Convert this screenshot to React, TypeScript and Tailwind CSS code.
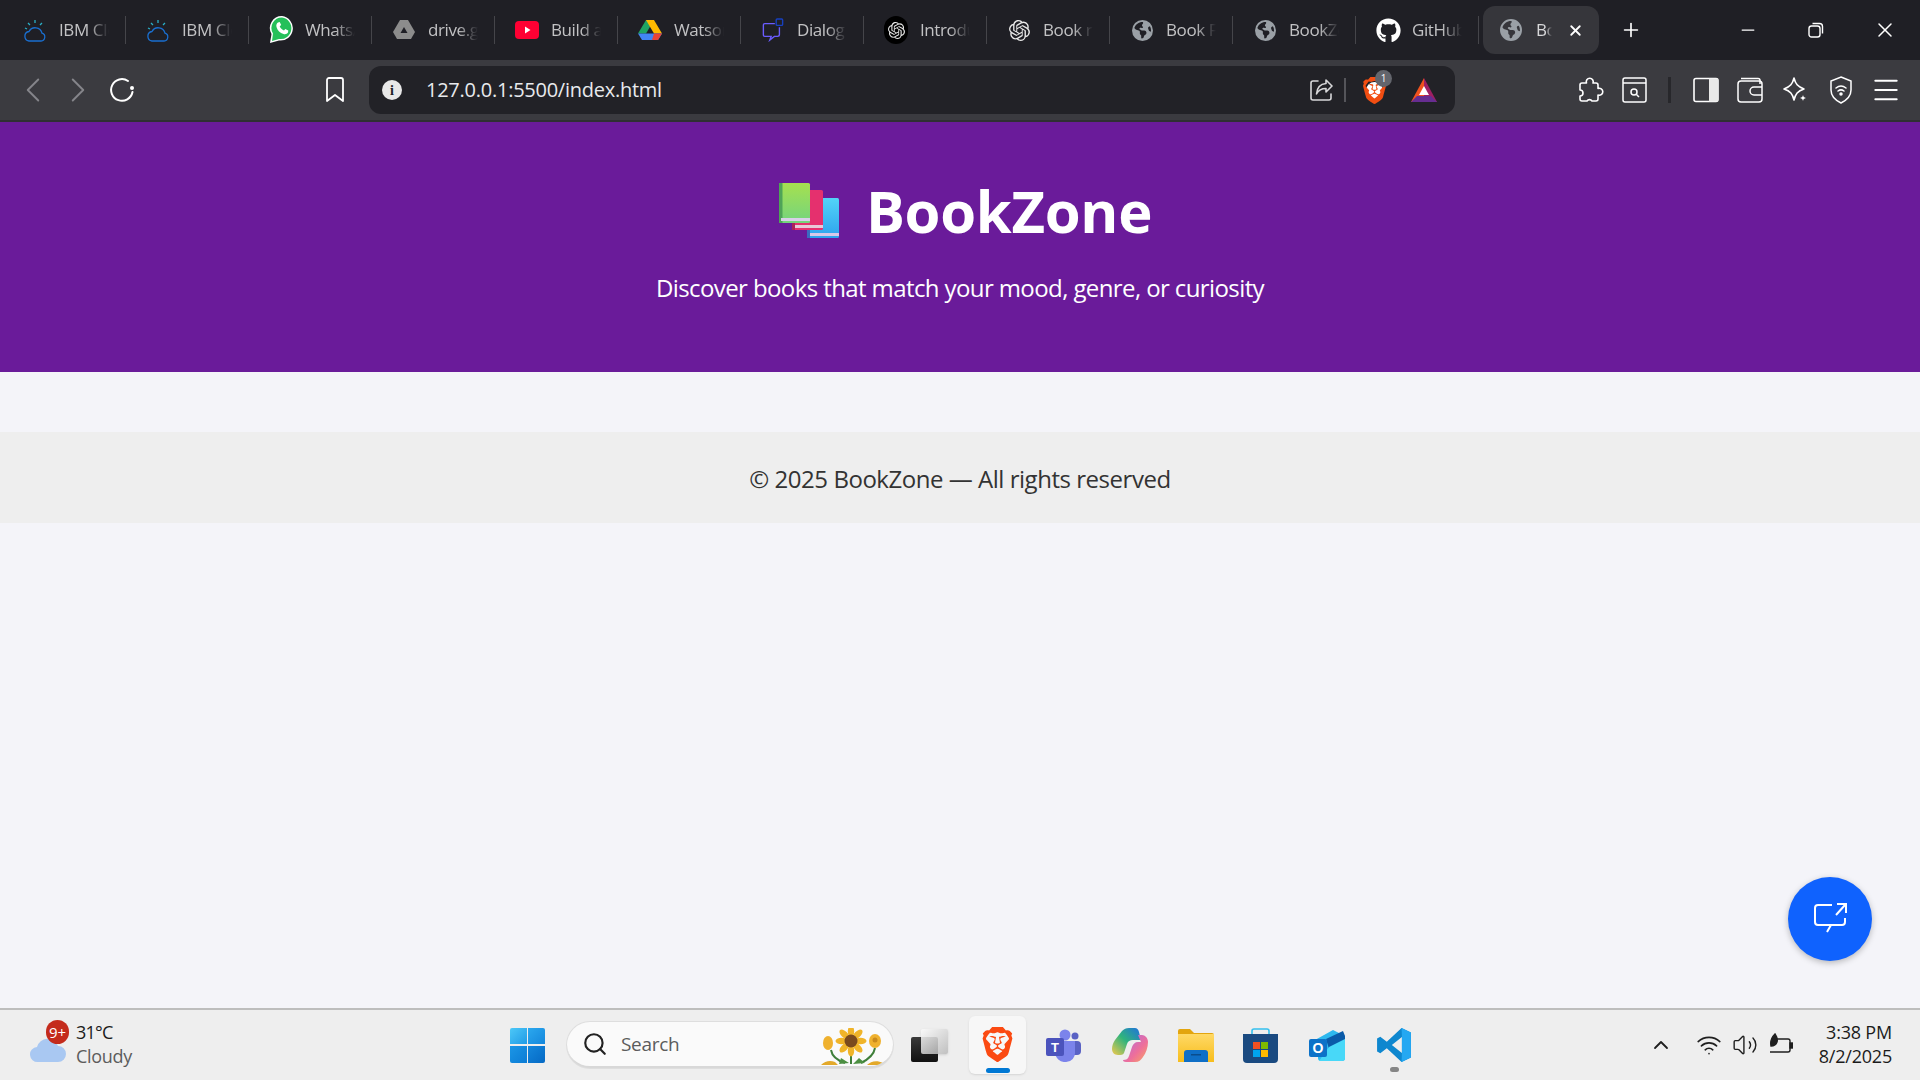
import { ChevronLeft, ChevronRight, ChevronUp, Plus, Minus, X, Search, Wifi, Volume2, Menu } from 'lucide-react';
import { FaGithub } from 'react-icons/fa';
import { FaEarthAmericas } from 'react-icons/fa6';
import { SiOpenai, SiBrave } from 'react-icons/si';
import type { ReactNode } from 'react';

const font = { fontFamily: '"Open Sans", "Noto Sans", sans-serif' };

function IbmCloud() {
  return (
    <svg width="24" height="26" viewBox="0 0 24 26" fill="none" strokeWidth="1.300">
      <path d="M6 24h12a4 4 0 0 0 1-7.800A7 7 0 0 0 6 14.500 4.800 4.800 0 0 0 6 24z" stroke="#1a6fd0" />
      <path d="M5 6l2 2M12 3v3M19 6l-2 2M2 11l2 1" stroke="#2ab0c8" />
    </svg>
  );
}

function WhatsApp() {
  return (
    <svg width="26" height="30" viewBox="0 0 26 30" className="ml-[1px]">
      <path d="M13 1a12 12 0 0 0-10.500 18L1 28l9-2.500A12 12 0 1 0 13 1z" fill="#fff" />
      <path d="M13 2.500a10.500 10.500 0 0 0-9 16L3 26l7-2a10.500 10.500 0 1 0 3-21.500z" fill="#25c05a" />
      <path d="M9 7.500c-1.500 1-2 2.500-1.500 4.500 1 3.500 3.500 6 7 7 2 .5 3.500 0 4.500-1.500l.3-2-3-1.500-1.300 1.500c-2-.8-3.500-2.300-4.300-4.300l1.500-1.300-1.500-3z" fill="#fff" />
    </svg>
  );
}

function DriveGray() {
  return (
    <svg width="24" height="24" viewBox="0 0 24 24">
      <path d="M8 2h8l7 12-4 7H5l-4-7z" fill="#8c8c8c" />
      <path d="M12 9l3.500 6h-7z" fill="#1f1f25" />
    </svg>
  );
}

function YouTube() {
  return (
    <svg width="24" height="20" viewBox="0 0 24 20">
      <rect width="24" height="18" y="1" rx="4" fill="#ff0033" />
      <path d="M10 6.500l5.500 3.500-5.500 3.500z" fill="#fff" />
    </svg>
  );
}

function DriveColor() {
  return (
    <svg width="24" height="22" viewBox="0 0 24 22">
      <path d="M8 1h8L8 14.500H0z" fill="#1fa463" />
      <path d="M16 1l8 13.500h-8L8 1z" fill="#ffba00" />
      <path d="M0 14.500h24L20 21H4z" fill="#4285f4" />
      <path d="M24 14.500L20 21h-6l2-6.500z" fill="#ea4335" />
    </svg>
  );
}

function Dialog() {
  return (
    <svg width="22" height="24" viewBox="0 0 24 26" fill="none">
      <path d="M14 6H3a1.500 1.500 0 0 0-1.500 1.500v11A1.500 1.500 0 0 0 3 20h7l-1.500 4 5-4H17a2 2 0 0 0 2-2V10" stroke="#6a5cff" strokeWidth="1.500" />
      <rect x="15.500" y="1" width="7" height="7" rx="1" stroke="#1740c0" strokeWidth="1.500" />
    </svg>
  );
}

function OpenAiDark() {
  return (
    <div className="w-[24px] h-[28px] rounded-full bg-black flex items-center justify-center">
      <SiOpenai size={17} color="#e8e8e8" />
    </div>
  );
}

const tabs: { icon: ReactNode; label: string }[] = [
  { icon: <IbmCloud />, label: 'IBM Cloud' },
  { icon: <IbmCloud />, label: 'IBM Cloud' },
  { icon: <WhatsApp />, label: 'WhatsApp' },
  { icon: <DriveGray />, label: 'drive.google' },
  { icon: <YouTube />, label: 'Build a' },
  { icon: <DriveColor />, label: 'Watson' },
  { icon: <Dialog />, label: 'Dialog' },
  { icon: <OpenAiDark />, label: 'Introduction' },
  { icon: <SiOpenai size={21} color="#e8e8e8" />, label: 'Book recs' },
  { icon: <FaEarthAmericas size={21} color="#9aa0a6" />, label: 'Book Finder' },
  { icon: <FaEarthAmericas size={21} color="#9aa0a6" />, label: 'BookZone' },
  { icon: <FaGithub size={25} color="#ffffff" />, label: 'GitHub' },
];

function TabStrip() {
  return (
    <div className="h-[60px] bg-[#1f1f25] flex items-center pl-[3px] shrink-0">
      {tabs.map((t, i) => (
        <div key={i} className="w-[123px] h-[28px] flex items-center border-r border-[#45454a] last:border-r-0 shrink-0">
          <div className="w-[56px] flex justify-center pl-[8px] shrink-0">{t.icon}</div>
          <span className="w-[50px] overflow-hidden whitespace-nowrap text-[17px] tracking-[-0.4px] text-[#c2c2c4] [mask-image:linear-gradient(to_right,black_60%,transparent)]">
            {t.label}
          </span>
        </div>
      ))}
      <div className="w-[116px] h-[48px] rounded-[12px] bg-[#36363b] flex items-center pl-[17px] shrink-0 ml-[4px]">
        <FaEarthAmericas size={22} color="#9aa0a6" />
        <span className="w-[16px] ml-[14px] overflow-hidden whitespace-nowrap text-[17px] tracking-[-0.4px] text-[#d8d8da] [mask-image:linear-gradient(to_right,black_60%,transparent)]">BookZone</span>
        <X size={17} color="#fff" strokeWidth={2.600} className="ml-[15px]" />
      </div>
      <Plus size={22} color="#fff" strokeWidth={1.800} className="ml-[21px]" />
      <div className="ml-auto flex items-center">
        <div className="w-[68px] flex justify-center"><Minus size={20} color="#fff" strokeWidth={1.500} /></div>
        <div className="w-[68px] flex justify-center">
          <svg width="16" height="16" viewBox="0 0 16 16" fill="none" stroke="#fff" strokeWidth="1.400">
            <rect x="1" y="4" width="11" height="11" rx="2.500" />
            <path d="M4.500 1.500h7a3 3 0 0 1 3 3v7" />
          </svg>
        </div>
        <div className="w-[70px] flex justify-center"><X size={24} color="#fff" strokeWidth={1.500} /></div>
      </div>
    </div>
  );
}

function Toolbar() {
  return (
    <div className="h-[62px] bg-[#3b3b40] flex items-start pt-[6px] shrink-0 border-b-2 border-[#2f2f33]">
      <div className="h-[48px] flex items-center shrink-0">
        <ChevronLeft size={42} color="#85858a" strokeWidth={1.100} className="ml-[12px]" />
        <ChevronRight size={42} color="#85858a" strokeWidth={1.100} className="ml-[3px]" />
        <svg width="26" height="26" viewBox="0 0 26 26" fill="none" stroke="#fff" strokeWidth="2" className="ml-[10px]">
          <path d="M23.500 15A10.800 10.800 0 1 1 19 4" strokeLinecap="round" />
          <circle cx="23" cy="11" r="2" fill="#fff" stroke="none" />
        </svg>
        <svg width="20" height="26" viewBox="0 0 20 26" fill="none" stroke="#fff" strokeWidth="1.800" strokeLinejoin="round" className="ml-[190px]">
          <path d="M2 3a2 2 0 0 1 2-2h12a2 2 0 0 1 2 2v21l-8-6-8 6z" />
        </svg>
      </div>
      <div className="ml-[24px] w-[1086px] h-[48px] rounded-[12px] bg-[#222227] flex items-center pl-[13px] shrink-0">
        <div className="w-[20px] h-[20px] rounded-full bg-[#e8e8e8] flex items-center justify-center text-[14px] font-bold text-[#222227]" style={{ fontFamily: '"Liberation Serif", serif' }}>i</div>
        <span className="ml-[24px] text-[20px] tracking-[-0.250px] text-[#e8eaed]">127.0.0.1:5500/index.html</span>
        <div className="ml-auto flex items-center">
          <svg width="24" height="24" viewBox="0 0 24 24" fill="none" stroke="#d8d8da" strokeWidth="1.600" strokeLinecap="round" strokeLinejoin="round">
            <path d="M9 3H4a2 2 0 0 0-2 2v15a2 2 0 0 0 2 2h16a2 2 0 0 0 2-2v-4" />
            <path d="M23 8l-6-6v3.500C11 6 8 10 7.500 16c2-4 5-5.500 9.500-5.500V14z" />
          </svg>
          <div className="w-[2px] h-[24px] bg-[#55555a] ml-[11px]" />
          <div className="relative ml-[15px]">
            <div className="absolute inset-[5px] rounded-full bg-white" />
            <SiBrave size={27} color="#f24e12" className="relative" />
            <div className="absolute -top-[7px] left-[14px] w-[17px] h-[17px] rounded-full bg-[#63656c] text-white text-[10px] flex items-center justify-center">1</div>
          </div>
          <svg width="28" height="26" viewBox="0 0 28 26" className="ml-[22px] mr-[17px]">
            <path d="M14 1L1 25h13z" fill="#f0521e" />
            <path d="M14 1l13 24H14z" fill="#9e1f63" />
            <path d="M1 25l6-6h14l6 6z" fill="#662d91" />
            <path d="M14 9l5 9H9z" fill="#fff" />
          </svg>
        </div>
      </div>
      <div className="h-[48px] flex items-center pl-[122px] shrink-0">
        <svg width="28" height="28" viewBox="0 0 28 28" fill="none" stroke="#fff" strokeWidth="1.600" strokeLinejoin="round">
          <path d="M3 9a2 2 0 0 1 2-2h4.500a3.500 3.500 0 1 1 6.500 0H19a2 2 0 0 1 2 2v3.500a3.500 3.500 0 1 1 0 6.500V23a2 2 0 0 1-2 2h-4a3 3 0 0 0-5 0H5a2 2 0 0 1-2-2v-3a3 3 0 0 0 0-6z" />
        </svg>
        <svg width="25" height="26" viewBox="0 0 25 26" fill="none" stroke="#fff" strokeWidth="1.500" className="ml-[17px]">
          <rect x="1" y="1" width="23" height="24" rx="2" />
          <path d="M1 6h23" />
          <circle cx="12" cy="15" r="3" />
          <path d="M14.500 17.500L17 20" />
        </svg>
        <div className="w-[3px] h-[26px] bg-[#27272b] ml-[21px]" />
        <svg width="26" height="26" viewBox="0 0 26 26" fill="none" className="ml-[22px]">
          <rect x="1" y="1.500" width="24" height="23" rx="2" stroke="#fff" strokeWidth="1.600" />
          <rect x="16" y="1.500" width="9" height="23" fill="#e8e8e8" />
        </svg>
        <svg width="26" height="26" viewBox="0 0 26 26" fill="none" stroke="#fff" strokeWidth="1.500" className="ml-[18px]">
          <path d="M4 1.500h17a2 2 0 0 1 2 2V7" />
          <rect x="1" y="4" width="24" height="21" rx="3" />
          <path d="M25 10h-8a3.500 3.500 0 0 0 0 8h8" />
        </svg>
        <svg width="26" height="28" viewBox="0 0 26 28" fill="none" className="ml-[19px]">
          <path d="M12 2c1.500 6 3.500 8.500 10 11-6.500 2-8.500 5-10 11-1.500-6-3.500-9-10-11 6.500-2.500 8.500-5 10-11z" stroke="#fff" strokeWidth="1.600" strokeLinejoin="round" />
          <path d="M21 19c.5 2 1 2.500 3 3-2 .5-2.500 1-3 3-.5-2-1-2.500-3-3 2-.5 2.500-1 3-3z" fill="#fff" />
        </svg>
        <svg width="24" height="28" viewBox="0 0 24 28" fill="none" stroke="#fff" strokeWidth="1.500" className="ml-[21px]">
          <path d="M12 1l10 4v9c0 6-4 10-10 13C6 24 2 20 2 14V5z" />
          <path d="M7 12c3-2.500 7-2.500 10 0M9 15c2-1.500 4-1.500 6 0" strokeLinecap="round" />
          <circle cx="12" cy="18" r="1" fill="#fff" />
        </svg>
        <Menu size={32} color="#fff" strokeWidth={1.500} className="ml-[17px]" />
      </div>
    </div>
  );
}

function BookStack() {
  return (
    <svg width="60" height="55" viewBox="0 0 60 55">
      <defs>
        <linearGradient id="greenBook" x1="0" y1="0" x2="0" y2="1">
          <stop offset="0" stopColor="#a6e04f" />
          <stop offset="1" stopColor="#74d47e" />
        </linearGradient>
        <linearGradient id="blueBook" x1="0" y1="0" x2="0" y2="1">
          <stop offset="0" stopColor="#52d4f8" />
          <stop offset="1" stopColor="#2ea2ee" />
        </linearGradient>
      </defs>
      <rect x="28" y="15" width="32" height="40" rx="1.500" fill="url(#blueBook)" />
      <rect x="28" y="15" width="3" height="40" fill="#3a6cc0" />
      <rect x="31" y="50" width="29" height="3" fill="#d8c8e8" />
      <rect x="13" y="7" width="31" height="40" rx="1.500" fill="#e5306e" />
      <rect x="13" y="7" width="3" height="40" fill="#a82358" />
      <rect x="16" y="42" width="28" height="3" fill="#e8c8d8" />
      <rect x="0" y="0" width="31" height="40" rx="1.500" fill="url(#greenBook)" />
      <rect x="0" y="0" width="3.500" height="40" fill="#4fa358" />
      <rect x="2" y="35" width="29" height="3" fill="#d8d0e8" />
    </svg>
  );
}

function Sunflower() {
  const petals = [0, 45, 90, 135, 180, 225, 270, 315];
  return (
    <svg width="63" height="38" viewBox="0 0 63 38">
      <path d="M30 20v16M10 22c1 6 5 10 14 13M54 20c-1 6-6 11-14 15" stroke="#3f7f3a" strokeWidth="2" fill="none" />
      <path d="M20 30l8 5-10 1zM38 30l-6 6 12-1z" fill="#4c8f42" />
      <path d="M0 37c4-4 9-5 14-3l3 3zM46 37c4-4 10-5 16-2v2z" fill="#e3a92a" />
      {petals.map(a => (
        <ellipse key={a} cx="30" cy="3.500" rx="3.200" ry="6" fill="#f0b429" transform={`rotate(${a} 30 13)`} />
      ))}
      <circle cx="30" cy="13" r="6.500" fill="#7a4a1e" />
      <ellipse cx="7" cy="15" rx="5" ry="7" fill="#efb12e" />
      <ellipse cx="54" cy="13" rx="6" ry="7" fill="#efb12e" />
      <circle cx="54" cy="12" r="2.500" fill="#c98a1c" />
    </svg>
  );
}

function Win11() {
  return (
    <div className="grid grid-cols-2 gap-[1.500px] w-[35px] h-[35px]">
      <div className="rounded-tl-[2px] bg-gradient-to-br from-[#4cc8f8] to-[#1e9be6]" />
      <div className="rounded-tr-[2px] bg-gradient-to-br from-[#2ba8ee] to-[#1487dc]" />
      <div className="rounded-bl-[2px] bg-gradient-to-br from-[#1b96e6] to-[#0c7cd5]" />
      <div className="rounded-br-[2px] bg-gradient-to-br from-[#1487dc] to-[#0669c4]" />
    </div>
  );
}

function TaskView() {
  return (
    <div className="relative w-[37px] h-[33px]">
      <div className="absolute left-0 bottom-0 w-[27px] h-[25px] rounded-[2px] bg-gradient-to-b from-[#3a3a3a] to-[#111]" />
      <div className="absolute right-0 top-0 w-[27px] h-[25px] rounded-[2px] bg-gradient-to-br from-[#fafafa]/90 to-[#b5b5b5]/80 shadow-sm" />
    </div>
  );
}

function Teams() {
  return (
    <svg width="36" height="33" viewBox="0 0 36 33">
      <circle cx="29" cy="7" r="3.500" fill="#5a62c4" />
      <circle cx="19" cy="6" r="5.500" fill="#7b83eb" />
      <rect x="23" y="12" width="12" height="14" rx="4" fill="#5a62c4" />
      <path d="M9 12h20v11a9 9 0 0 1-9 10 10 10 0 0 1-11-10z" fill="#7b83eb" />
      <rect x="0" y="9" width="18" height="18" rx="2" fill="#4b53bc" />
      <text x="9" y="23" textAnchor="middle" fontSize="13" fontWeight="700" fill="#fff" fontFamily="Liberation Sans, sans-serif">T</text>
    </svg>
  );
}

function Copilot() {
  return (
    <svg width="36" height="34" viewBox="0 0 36 34">
      <defs>
        <linearGradient id="copA" x1="0" y1="1" x2="1" y2="0">
          <stop offset="0" stopColor="#f2c94c" />
          <stop offset="0.5" stopColor="#2fb47c" />
          <stop offset="1" stopColor="#1f6fe0" />
        </linearGradient>
        <linearGradient id="copB" x1="0" y1="0" x2="1" y2="1">
          <stop offset="0" stopColor="#a86be8" />
          <stop offset="0.6" stopColor="#ee6f9a" />
          <stop offset="1" stopColor="#f8a860" />
        </linearGradient>
      </defs>
      <path d="M10 3c2-2 4-3 7-3h6c2 0 3 1 4 4l2 8h-8c-3 0-5 1-6 4l-3 9c-1 2-3 2-6 2-4 0-6-3-6-6 0-3 1-6 3-9z" fill="url(#copA)" />
      <path d="M26 7h4c3 0 6 3 6 7 0 5-2 11-5 15-2 3-4 5-8 5H14c-2 0-3-1-3-2 3 0 5-1 6-4l3-9c1-3 3-5 6-5h3z" fill="url(#copB)" />
    </svg>
  );
}

function Folder() {
  return (
    <svg width="36" height="33" viewBox="0 0 36 33">
      <path d="M0 2a2 2 0 0 1 2-2h10l4 4h18a2 2 0 0 1 2 2v4H0z" fill="#e3a50e" />
      <path d="M0 5h36v28H0z" fill="url(#fold)" />
      <defs>
        <linearGradient id="fold" x1="0" y1="0" x2="0" y2="1">
          <stop offset="0" stopColor="#ffd966" />
          <stop offset="1" stopColor="#f7bd1c" />
        </linearGradient>
      </defs>
      <path d="M6 33V24a3 3 0 0 1 3-3h18a3 3 0 0 1 3 3v9z" fill="#0f6fc6" />
      <rect x="13" y="25" width="10" height="1.500" fill="#0a4d8c" />
    </svg>
  );
}

function Store() {
  return (
    <svg width="35" height="35" viewBox="0 0 35 35" className="mr-[4px]">
      <path d="M9 8V3a2 2 0 0 1 2-2h13a2 2 0 0 1 2 2v5" fill="none" stroke="#35c0ee" strokeWidth="1.600" />
      <path d="M0 6h35v25a4 4 0 0 1-4 4H4a4 4 0 0 1-4-4z" fill="#1a4a80" />
      <rect x="10" y="14" width="7" height="7" fill="#f05022" />
      <rect x="18" y="14" width="7" height="7" fill="#7fba00" />
      <rect x="10" y="22" width="7" height="7" fill="#00a4ef" />
      <rect x="18" y="22" width="7" height="7" fill="#ffb900" />
    </svg>
  );
}

function Outlook() {
  return (
    <svg width="36" height="31" viewBox="0 0 36 31" className="mr-[2px]">
      <path d="M6 10L24 0l12 6v22a3 3 0 0 1-3 3H12a3 3 0 0 1-3-3v-6z" fill="#2db8ee" />
      <path d="M17 9l17-8 2 5v4L20 19z" fill="#0a5aa8" />
      <path d="M10 31l10-14 16-8v19a3 3 0 0 1-3 3z" fill="#48d8f8" />
      <rect x="0" y="9" width="18" height="18" rx="2" fill="#0c72c8" />
      <text x="9" y="23" textAnchor="middle" fontSize="14" fontWeight="700" fill="#fff" fontFamily="Liberation Sans, sans-serif">O</text>
    </svg>
  );
}

function VsCode() {
  return (
    <svg width="36" height="36" viewBox="0 0 100 100">
      <path d="M71 3L30 41 12 27 3 32v36l9 5 18-14 41 38 26-12V15zM72 28v44L44 50z" fill="#0e87cf" />
      <path d="M71 3l26 12v70L71 97 72 72V28z" fill="#24a8f2" />
    </svg>
  );
}

function Taskbar() {
  const apps = [<Teams />, <Copilot />, <Folder />, <Store />, <Outlook />];
  return (
    <div className="h-[72px] shrink-0 bg-[#eeeeee] border-t-2 border-[#bdbdbd] flex items-center">
      <div className="w-[510px] shrink-0 flex items-center pl-[30px]">
        <div className="relative w-[36px] h-[36px]">
          <svg width="36" height="26" viewBox="0 0 36 26" className="absolute bottom-0 left-0">
            <path d="M8 25a7.500 7.500 0 0 1-1-15 11 11 0 0 1 21-1 8 8 0 0 1 0 16z" fill="#a9c8f2" />
          </svg>
          <div className="absolute top-[-7px] left-[16px] w-[23px] h-[24px] rounded-full bg-[#c42b1c] text-white text-[15px] flex items-center justify-center">9+</div>
        </div>
        <div className="ml-[10px] -mt-[3px] flex flex-col text-[18px] leading-[24px]">
          <span className="text-[#1b1b1b] tracking-[-0.8px]">31°C</span>
          <span className="text-[#5c5c5c] tracking-[-0.3px]">Cloudy</span>
        </div>
      </div>
      <Win11 />
      <div className="ml-[22px] w-[326px] h-[46px] rounded-full bg-[#fafafa] border-b-2 border-[#d8d8d8] shadow-[0_0_0_1px_#dedede] flex items-center pl-[15px] shrink-0 relative overflow-hidden">
        <Search size={26} color="#222" strokeWidth={2} />
        <span className="ml-[13px] text-[19px] text-[#5c5c5c] tracking-[-0.3px]">Search</span>
        <div className="absolute right-[9px] bottom-0"><Sunflower /></div>
      </div>
      <div className="ml-[18px] shrink-0"><TaskView /></div>
      <div className="relative ml-[21px] w-[57px] h-[58px] rounded-[6px] bg-[#f7f7f7] shadow-[0_1px_2px_#d4d4d4] flex justify-center pt-[11px] shrink-0">
        <SiBrave size={35} color="#fb4a12" />
        <div className="absolute bottom-[1px] left-[17px] w-[24px] h-[5px] rounded-full bg-[#0078d4]" />
      </div>
      {apps.map((a, i) => (
        <div key={i} className={`w-[66px] flex justify-center shrink-0 ${i === 0 ? 'ml-[5px]' : ''}`}>{a}</div>
      ))}
      <div className="relative w-[66px] flex justify-center shrink-0">
        <VsCode />
        <div className="absolute -bottom-[9px] left-[29px] w-[9px] h-[5px] rounded-full bg-[#858585]" />
      </div>
      <div className="ml-[222px] flex items-center shrink-0">
        <ChevronUp size={24} color="#1f1f1f" strokeWidth={1.800} />
        <Wifi size={26} color="#1f1f1f" strokeWidth={1.500} className="ml-[23px]" />
        <Volume2 size={26} color="#1f1f1f" strokeWidth={1.300} className="ml-[10px]" />
        <svg width="26" height="24" viewBox="0 0 26 24" fill="none" stroke="#1f1f1f" strokeWidth="1.400" className="ml-[9px]">
          <path d="M9 6h12a2 2 0 0 1 2 2v9a2 2 0 0 1-2 2H3" />
          <rect x="23" y="10" width="2.500" height="5" fill="#1f1f1f" />
          <path d="M8 1c2 3 3 5 2 8-1 3-4 4-6 4C3 8 5 4 8 1z" fill="#1f1f1f" />
        </svg>
        <div className="w-[100px] flex flex-col items-end -mt-[2px] text-[18px] leading-[24px] text-[#1b1b1b] tracking-[-0.2px] ml-[-1px]">
          <span>3:38 PM</span>
          <span>8/2/2025</span>
        </div>
      </div>
    </div>
  );
}

export default function App() {
  return (
    <div className="relative w-full h-screen overflow-hidden flex flex-col bg-[#f4f4f9]" style={font}>
      <TabStrip />
      <Toolbar />
      <header className="h-[250px] shrink-0 bg-[#6a1b9a] flex flex-col items-center pt-[62px] text-white">
        <div className="flex items-center gap-[27px] h-[52px] pl-[11px]">
          <BookStack />
          <h1 className="text-[58px] font-bold tracking-[-0.300px]">BookZone</h1>
        </div>
        <p className="mt-[36px] text-[24px] tracking-[-0.600px] leading-[32px]">Discover books that match your mood, genre, or curiosity</p>
      </header>
      <main className="h-[60px] shrink-0" />
      <footer className="h-[91px] shrink-0 bg-[#eeeeee] flex items-center justify-center pt-[3px] text-[24px] tracking-[-0.470px] text-[#333333]">
        © 2025 BookZone — All rights reserved
      </footer>
      <div className="flex-1" />
      <Taskbar />
      <button className="absolute right-[48px] bottom-[119px] w-[84px] h-[84px] rounded-full bg-[#0f62fe] shadow-[0_2px_6px_rgba(0,0,0,0.25)] flex items-center justify-center">
        <svg width="34" height="32" viewBox="0 0 34 32" fill="none" stroke="#fff" strokeWidth="2">
          <path d="M19 2H5a3 3 0 0 0-3 3v14a3 3 0 0 0 3 3h13l-4 7" />
          <path d="M18 22h11a3 3 0 0 0 3-3v-4" />
          <path d="M23 12L32 2M24 1h9v9" />
        </svg>
      </button>
    </div>
  );
}
